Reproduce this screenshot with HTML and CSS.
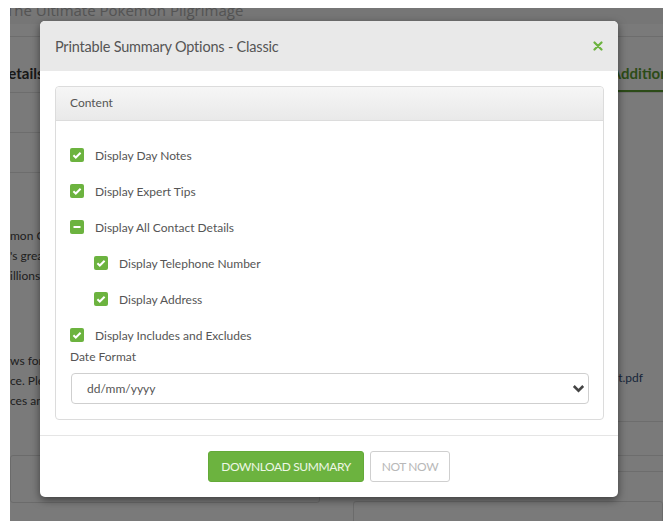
FILE: index.html
```html
<!DOCTYPE html>
<html lang="en">
<head>
    <meta charset="UTF-8">
    <title>Printable Summary Options</title>
    <link rel="stylesheet" href="styles.css">
</head>
<body>
    <div class="page">
        <!-- Itinerary page behind the dialog -->
        <h1 class="trip-title">The Ultimate Pokemon Pilgrimage</h1>
        <div class="tabs">
            <span class="tab">Details</span>
            <span class="tab tab-active">Additional</span>
        </div>
        <div class="columns">
            <div class="col">
                <div class="row-line"></div>
                <div class="row-line"></div>
                <p class="copy">mon Go fans and collectors</p>
                <p class="copy">'s greatest places to visit</p>
                <p class="copy">illions of players worldwide</p>
                <p class="copy copy-gap">ws for a relaxed pace</p>
                <p class="copy">ce. Please check the times</p>
                <p class="copy">ces and opening hours</p>
                <div class="box box-left"></div>
            </div>
            <div class="col col-right">
                <p class="file">itinerary-summary-print.pdf</p>
                <div class="row-line line-a"></div>
                <div class="row-line line-b"></div>
                <div class="row-line line-c"></div>
                <div class="box box-right"></div>
            </div>
        </div>

        <div class="backdrop"></div>

        <div class="modal">
            <div class="modal-header">
                <h2 class="modal-title">Printable Summary Options - Classic</h2>
                <span class="close">
                    <svg width="10" height="10" viewBox="0 0 10 10"><path d="M1.5 1.5l7 7M8.5 1.5l-7 7" stroke="#6cb33f" stroke-width="2.2" stroke-linecap="round"/></svg>
                </span>
            </div>
            <div class="modal-body">
                <div class="panel">
                    <div class="panel-heading">Content</div>
                    <div class="panel-body">
                        <label class="check">
                            <span class="box-check"><svg width="14" height="14" viewBox="0 0 14 14"><path d="M3.4 7.2l2.4 2.3 4.8-4.8" fill="none" stroke="#fff" stroke-width="2"/></svg></span>
                            Display Day Notes
                        </label>
                        <label class="check">
                            <span class="box-check"><svg width="14" height="14" viewBox="0 0 14 14"><path d="M3.4 7.2l2.4 2.3 4.8-4.8" fill="none" stroke="#fff" stroke-width="2"/></svg></span>
                            Display Expert Tips
                        </label>
                        <label class="check">
                            <span class="box-check"><svg width="14" height="14" viewBox="0 0 14 14"><path d="M3.5 7h7" stroke="#fff" stroke-width="2.2"/></svg></span>
                            Display All Contact Details
                        </label>
                        <label class="check check-sub">
                            <span class="box-check"><svg width="14" height="14" viewBox="0 0 14 14"><path d="M3.4 7.2l2.4 2.3 4.8-4.8" fill="none" stroke="#fff" stroke-width="2"/></svg></span>
                            Display Telephone Number
                        </label>
                        <label class="check check-sub">
                            <span class="box-check"><svg width="14" height="14" viewBox="0 0 14 14"><path d="M3.4 7.2l2.4 2.3 4.8-4.8" fill="none" stroke="#fff" stroke-width="2"/></svg></span>
                            Display Address
                        </label>
                        <label class="check">
                            <span class="box-check"><svg width="14" height="14" viewBox="0 0 14 14"><path d="M3.4 7.2l2.4 2.3 4.8-4.8" fill="none" stroke="#fff" stroke-width="2"/></svg></span>
                            Display Includes and Excludes
                        </label>

                        <div class="field-label">Date Format</div>
                        <div class="select">
                            <span>dd/mm/yyyy</span>
                            <svg width="13" height="9" viewBox="0 0 13 9"><path d="M1.8 2l4.7 4.6L11.2 2" fill="none" stroke="#444" stroke-width="2.6"/></svg>
                        </div>
                    </div>
                </div>
            </div>
            <div class="modal-footer">
                <button class="btn btn-primary">Download Summary</button>
                <button class="btn btn-default">Not Now</button>
            </div>
        </div>
    </div>
</body>
</html>
```

FILE: styles.css
```css
body {
    margin: 0;
    background-color: #ffffff;
    font-family: Lato, "Open Sans", sans-serif;
}
.page {
    position: relative;
    margin: 8px 0 0 10px;
    width: 653px;
    height: 513px;
    background-color: #ffffff;
    overflow: hidden;
}
.trip-title {
    margin: -10px 0 0 -4px;
    height: 38px;
    font-family: "Open Sans", sans-serif;
    font-size: 15px;
    line-height: 24px;
    font-weight: 400;
    color: #b0b0b0;
    border-bottom: 1px solid #e4e4e4;
    background: linear-gradient(#f6f6f6 26px, #ffffff 26px);
}
.tabs {
    display: flex;
    justify-content: space-between;
    align-items: flex-end;
    height: 55px;
    border-bottom: 1px solid #e4e4e4;
}
.tab {
    font-size: 15px;
    font-weight: 700;
    color: #333;
    margin-left: -13px;
    padding-bottom: 10px;
}
.tab-active {
    color: #5c9e33;
    margin-left: 0;
    margin-right: -17px;
    padding-bottom: 8px;
    border-bottom: 2px solid #5c9e33;
}
.columns {
    display: flex;
    gap: 33px;
}
.col {
    width: 310px;
}
.col-right {
    flex: 1;
}
.row-line {
    height: 39px;
    border-bottom: 1px solid #e4e4e4;
}
.copy {
    margin: 0;
    font-size: 12px;
    line-height: 20px;
    color: #444;
    white-space: nowrap;
}
.col > .row-line + .copy {
    margin-top: 53px;
}
.copy-gap {
    margin-top: 65px;
}
.box {
    border: 1px solid #e0e0e0;
    border-radius: 3px;
}
.box-left {
    margin-top: 44px;
    height: 46px;
}
.file {
    margin: 277px 0 0 0;
    text-align: right;
    font-size: 12px;
    line-height: 15px;
    color: #33507a;
    white-space: nowrap;
    padding-right: 20px;
}
.line-a {
    height: 36px;
}
.line-b {
    height: 33px;
}
.line-c {
    height: 15px;
}
.box-right {
    margin-top: 29px;
    height: 30px;
}
.backdrop {
    position: absolute;
    inset: 0;
    background-color: rgba(0, 0, 0, 0.52);
}

/* dialog */
.modal {
    position: absolute;
    left: 30px;
    top: 13px;
    width: 578px;
    background-color: #ffffff;
    border-radius: 5px;
    box-shadow: 0 3px 9px rgba(0, 0, 0, 0.5);
    overflow: hidden;
}
.modal-header {
    display: flex;
    justify-content: space-between;
    align-items: center;
    height: 50px;
    padding: 0 15px 0 15px;
    background-color: #e9e9e9;
}
.modal-title {
    margin: 0;
    font-size: 14.5px;
    font-weight: 400;
    color: #555;
    letter-spacing: -0.2px;
}
.close {
    display: flex;
}
.modal-body {
    padding: 15px 14px 15px 15px;
}
.panel {
    border: 1px solid #dcdcdc;
    border-radius: 4px;
}
.panel-heading {
    height: 33px;
    line-height: 31px;
    padding-left: 14px;
    font-size: 12px;
    color: #555;
    background: linear-gradient(#f6f6f6, #e9e9e9);
    border-bottom: 1px solid #dcdcdc;
    border-radius: 4px 4px 0 0;
}
.panel-body {
    padding: 24px 14px 15px 14px;
}
.check {
    display: flex;
    align-items: center;
    gap: 11px;
    height: 20px;
    margin-bottom: 16px;
    font-size: 12px;
    color: #555;
}
.check-sub {
    margin-left: 24px;
}
.check:nth-child(6) {
    margin-bottom: 3px;
}
.box-check {
    display: flex;
    width: 14px;
    height: 14px;
    border-radius: 2px;
    background-color: #6cb33f;
}
.field-label {
    font-size: 12px;
    color: #555;
    line-height: 18px;
}
.select {
    display: flex;
    justify-content: space-between;
    align-items: center;
    margin-top: 7px;
    margin-left: 1px;
    height: 29px;
    padding: 0 3px 0 15px;
    border: 1px solid #cfcfcf;
    border-radius: 4px;
    font-size: 12px;
    color: #555;
}
.modal-footer {
    display: flex;
    justify-content: center;
    gap: 6px;
    padding: 15px;
    border-top: 1px solid #e5e5e5;
}
.btn {
    height: 31px;
    padding: 0;
    font-family: Lato, sans-serif;
    font-size: 12px;
    text-transform: uppercase;
    letter-spacing: -0.4px;
    white-space: nowrap;
    border-radius: 3px;
    cursor: pointer;
}
.btn-primary {
    width: 156px;
    background-color: #6cb33f;
    color: #eef7e6;
    border: 1px solid #64aa38;
}
.btn-default {
    width: 80px;
    background-color: #ffffff;
    color: #b8b8b8;
    border: 1px solid #cfcfcf;
}
```
